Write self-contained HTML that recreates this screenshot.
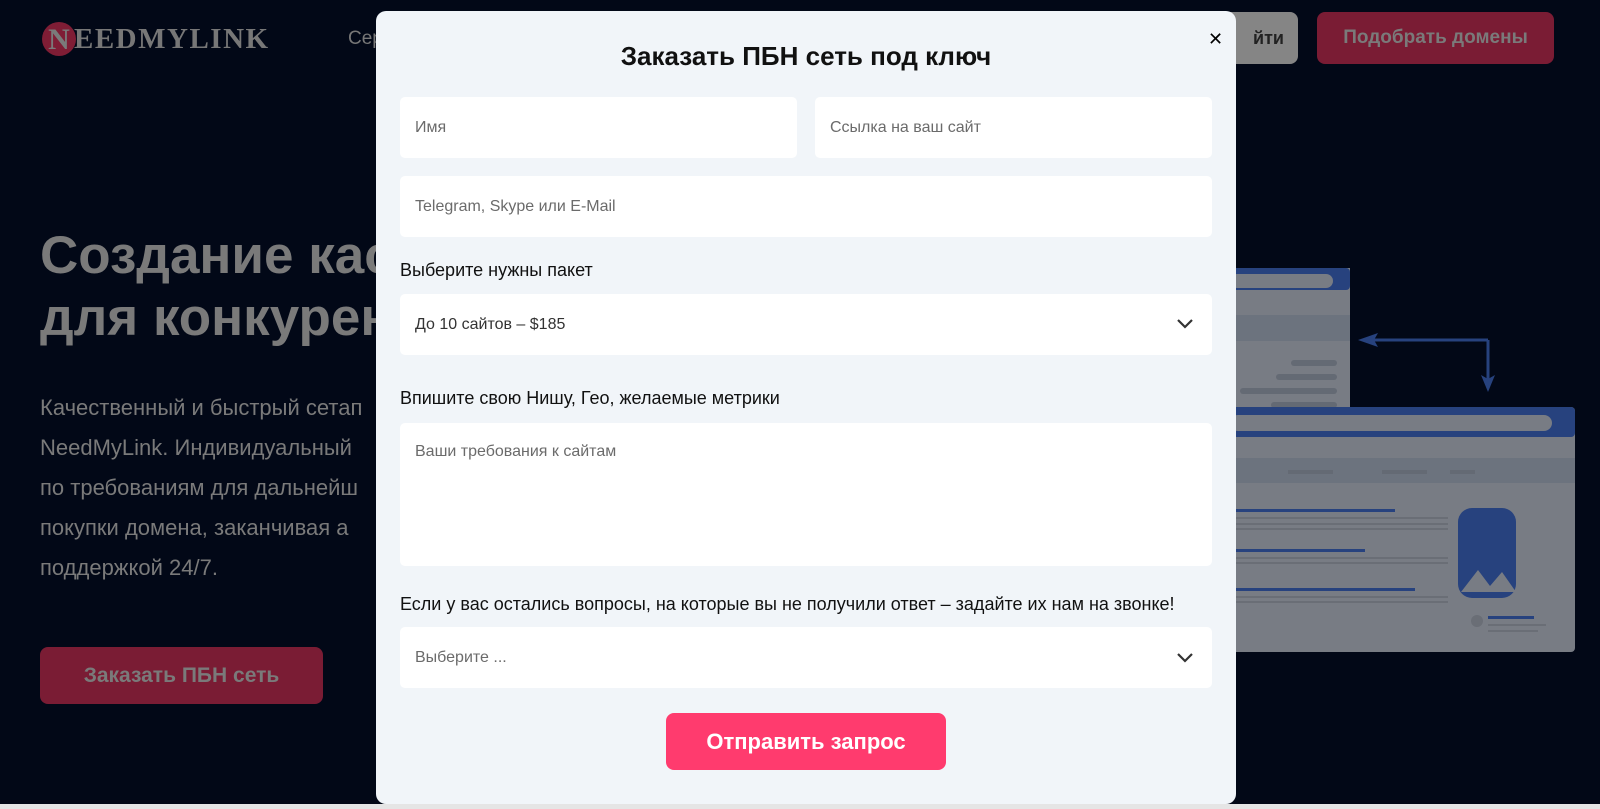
<!DOCTYPE html>
<html><head><meta charset="utf-8"><style>
*{box-sizing:border-box;margin:0;padding:0}
body{width:1600px;height:809px;overflow:hidden;background:#020817;font-family:"Liberation Sans","Noto Sans CJK SC",sans-serif;position:relative}
.abs{position:absolute}
.logo{left:42px;top:22px;display:flex;align-items:center}
.logo .c{width:34px;height:34px;border-radius:50%;background:#7f1d35;color:#7a7a7a;font:bold 30px "Liberation Serif",serif;text-align:center;line-height:36px}
.logo span.t{font:bold 29px "Liberation Serif",serif;color:#777;letter-spacing:1.5px;margin-left:-2px}
.nav{left:348px;top:28px;color:#777;font-size:19px}
.btn1{left:1208px;top:12px;width:90px;height:52px;background:#858585;border-radius:8px;color:#222;font-weight:bold;font-size:18px;line-height:52px;text-align:right;padding-right:14px}
.btn2{left:1317px;top:12px;width:237px;height:52px;background:#7a1c34;border-radius:8px;color:#7a7a7a;font-weight:bold;font-size:19px;line-height:52px;text-align:center}
h1{left:40px;top:225px;color:#7a7a7a;font-size:53px;line-height:62px;font-weight:bold}
.p{left:40px;top:388px;color:#7a7a7a;font-size:22px;line-height:40px}
.ord{left:40px;top:647px;width:283px;height:57px;background:#7a1c34;border-radius:8px;color:#7a7a7a;font-weight:bold;font-size:21px;line-height:57px;text-align:center}
.modal{left:376px;top:11px;width:860px;height:793px;background:#f1f5f9;border-radius:10px}
.title{left:0;width:860px;top:30px;text-align:center;font-size:26px;font-weight:bold;color:#111}
.x{left:832px;top:18px;font-size:18px;color:#000}
.in{background:#fff;border-radius:5px;color:#6b6b6b;font-size:16px;padding-left:15px}
.lbl{font-size:18px;color:#111}
.send{left:290px;top:702px;width:280px;height:57px;background:#ff3b6e;border-radius:8px;color:#fff;font-weight:bold;font-size:22px;line-height:57px;text-align:center}
</style></head><body>
<div class="abs logo"><div class="c">N</div><span class="t">EEDMYLINK</span></div>
<div class="abs nav">Сер</div>
<div class="abs btn1">йти</div>
<div class="abs btn2">Подобрать домены</div>
<h1 class="abs">Создание каст<br>для конкурен</h1>
<div class="abs p">Качественный и быстрый сетап<br>NeedMyLink. Индивидуальный<br>по требованиям для дальнейш<br>покупки домена, заканчивая а<br>поддержкой 24/7.</div>
<div class="abs ord">Заказать ПБН сеть</div>
<svg class="abs" style="left:1180px;top:260px" width="420" height="400">
<rect x="50" y="8" width="120" height="150" fill="#787c84"/>
<rect x="50" y="8" width="120" height="22" rx="4" fill="#27427e"/>
<rect x="50" y="14" width="103" height="14" rx="7" fill="#787c84"/>
<rect x="50" y="55" width="120" height="26" fill="#6c737e"/>
<g fill="#646a74"><rect x="111" y="100" width="46" height="6" rx="3"/><rect x="96" y="114" width="61" height="6" rx="3"/><rect x="60" y="128" width="97" height="6" rx="3"/><rect x="91" y="142" width="66" height="6" rx="3"/></g>
<path d="M308 80H190M308 80V125" stroke="#27427e" stroke-width="3" fill="none"/>
<path d="M178 80L198 73L194 80L198 87Z M308 132L301 115L308 119L315 115Z" fill="#27427e"/>
<rect x="50" y="147" width="345" height="245" rx="4" fill="#787c84"/>
<rect x="50" y="147" width="345" height="30" rx="4" fill="#27427e"/>
<rect x="50" y="155" width="322" height="16" rx="8" fill="#787c84"/>
<rect x="50" y="198" width="345" height="25" fill="#6c737e"/>
<g fill="#646a74"><rect x="108" y="210" width="45" height="4"/><rect x="202" y="210" width="45" height="4"/><rect x="270" y="210" width="25" height="4"/></g>
<g fill="#27427e"><rect x="50" y="249" width="165" height="3"/><rect x="50" y="289" width="135" height="3"/><rect x="50" y="328" width="185" height="3"/>
<rect x="278" y="248" width="58" height="90" rx="14"/><rect x="308" y="356" width="46" height="3"/></g>
<g fill="#6a6e76"><rect x="50" y="257" width="218" height="2"/><rect x="50" y="263" width="218" height="2"/><rect x="50" y="268" width="218" height="2"/><rect x="50" y="297" width="218" height="2"/><rect x="50" y="302" width="218" height="2"/><rect x="50" y="336" width="218" height="2"/><rect x="50" y="341" width="218" height="2"/><rect x="308" y="364" width="58" height="2"/><rect x="308" y="370" width="50" height="2"/><circle cx="297" cy="361" r="6"/></g>
<path d="M281 332L298 310L310 326L322 312L336 332Z" fill="#787c84"/>
</svg>
<div class="abs modal">
<div class="abs title">Заказать ПБН сеть под ключ</div>
<div class="abs x">✕</div>
<div class="abs in" style="left:24px;top:86px;width:397px;height:61px;line-height:61px">Имя</div>
<div class="abs in" style="left:439px;top:86px;width:397px;height:61px;line-height:61px">Ссылка на ваш сайт</div>
<div class="abs in" style="left:24px;top:165px;width:812px;height:61px;line-height:61px">Telegram, Skype или E-Mail</div>
<div class="abs lbl" style="left:24px;top:249px">Выберите нужны пакет</div>
<div class="abs in" style="left:24px;top:283px;width:812px;height:61px;line-height:61px;color:#333">До 10 сайтов – $185</div>
<svg class="abs" style="left:800px;top:306px" width="18" height="12"><path d="M2 3L9 10L16 3" stroke="#333" stroke-width="2.2" fill="none"/></svg>
<div class="abs lbl" style="left:24px;top:377px">Впишите свою Нишу, Гео, желаемые метрики</div>
<div class="abs in" style="left:24px;top:412px;width:812px;height:143px;padding-top:20px">Ваши требования к сайтам</div>
<div class="abs lbl" style="left:24px;top:583px">Если у вас остались вопросы, на которые вы не получили ответ – задайте их нам на звонке!</div>
<div class="abs in" style="left:24px;top:616px;width:812px;height:61px;line-height:61px">Выберите ...</div>
<svg class="abs" style="left:800px;top:640px" width="18" height="12"><path d="M2 3L9 10L16 3" stroke="#333" stroke-width="2.2" fill="none"/></svg>
<div class="abs send">Отправить запрос</div>
</div>
<div class="abs" style="left:0;top:804px;width:1600px;height:5px;background:#e5e5e5"></div>
</body></html>
